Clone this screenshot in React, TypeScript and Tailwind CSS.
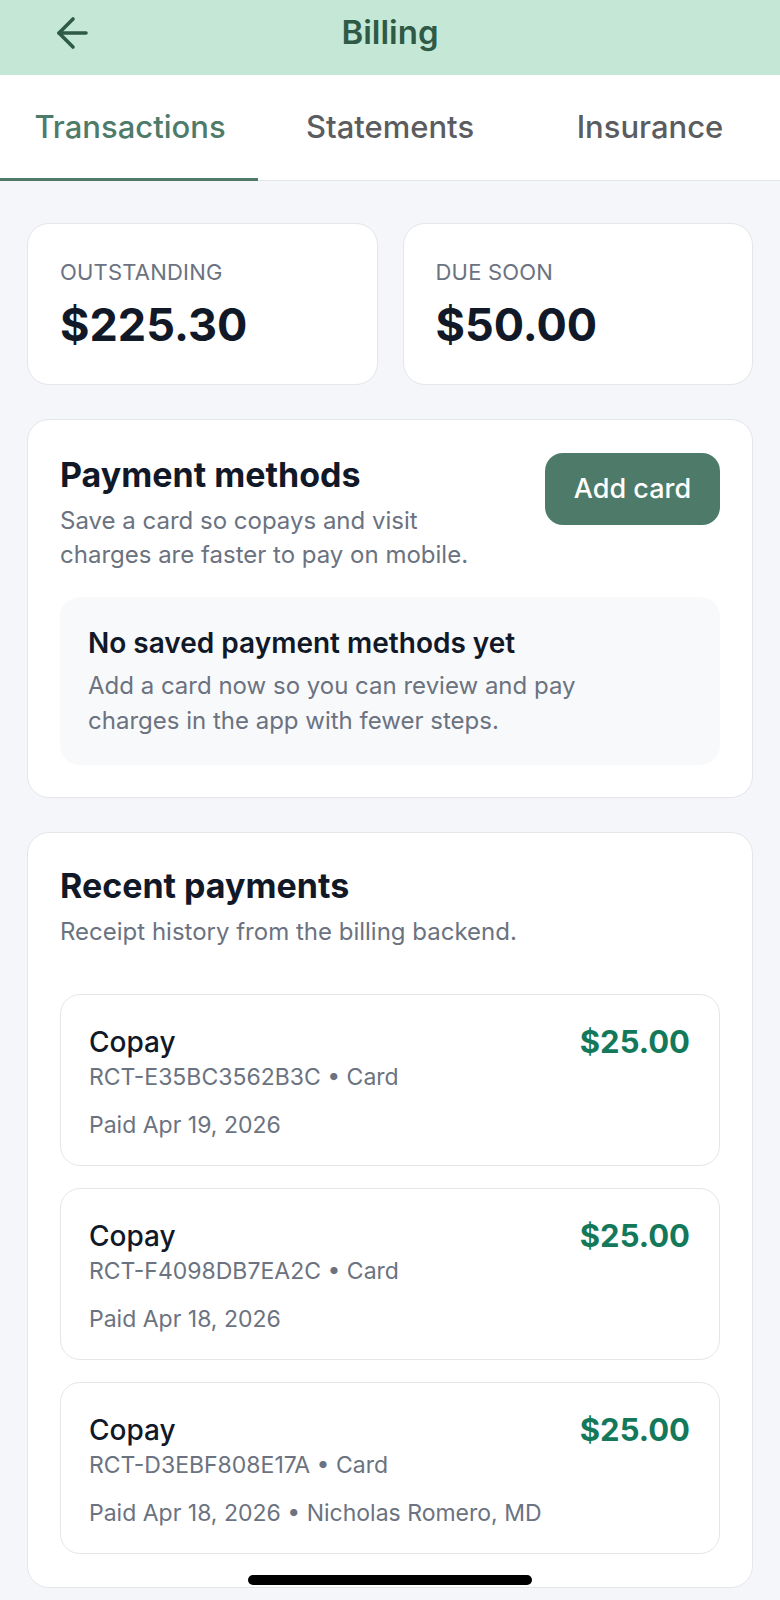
import React from "react";

type Payment = {
    id: string;
    label: string;
    amount: string;
    method: string;
    paid: string;
    provider?: string;
};

const payments: Payment[] = [
    { id: "RCT-E35BC3562B3C", label: "Copay", amount: "$25.00", method: "Card", paid: "Paid Apr 19, 2026" },
    { id: "RCT-F4098DB7EA2C", label: "Copay", amount: "$25.00", method: "Card", paid: "Paid Apr 18, 2026" },
    { id: "RCT-D3EBF808E17A", label: "Copay", amount: "$25.00", method: "Card", paid: "Paid Apr 18, 2026", provider: "Nicholas Romero, MD" },
];

const tabs = ["Transactions", "Statements", "Insurance"];

const BackArrow = () => (
    <svg width="34" height="34" viewBox="0 0 34 34" fill="none" stroke="#2f5a46" strokeWidth="3.6" strokeLinecap="round" strokeLinejoin="round">
        <path d="M18 3 L4 17 L18 31" />
        <path d="M4 17 H31" />
    </svg>
);

const SummaryCard = ({ label, value }: { label: string; value: string }) => (
    <div className="flex-1 bg-white rounded-[22px] border border-[#e4e6ea] px-[32px] pt-[34px] pb-[33px]">
        <div className="text-[22px] leading-[28px] text-[#6b7280] tracking-[0.2px] uppercase">{label}</div>
        <div className="mt-[13px] text-[45px] leading-[52px] font-bold text-[#111827]">{value}</div>
    </div>
);

const PaymentRow = ({ item }: { item: Payment }) => (
    <div className="bg-white rounded-[20px] border border-[#e4e6ea] pl-[28px] pr-[29px] pt-[30px] pb-[25px]">
        <div className="flex justify-between items-start">
            <div className="text-[28px] leading-[34px] font-medium text-[#111827]">{item.label}</div>
            <div className="text-[31px] leading-[34px] font-bold text-[#14795a]">{item.amount}</div>
        </div>
        <div className="mt-[3px] text-[23px] leading-[30px] text-[#6b7280]">
            {item.id} • {item.method}
        </div>
        <div className="mt-[18px] text-[23px] leading-[30px] text-[#6b7280]">
            {item.paid}
            {item.provider ? " • " + item.provider : ""}
        </div>
    </div>
);

export default function App() {
    return (
        <div className="min-h-[1600px] bg-[#f5f6f9] font-['Inter',sans-serif] relative">
            {/* header */}
            <div className="h-[75px] pb-[9px] bg-[#c5e8d6] grid grid-cols-[1fr_auto_1fr] items-center">
                <div className="pl-[55px] flex items-center">
                    <BackArrow />
                </div>
                <div className="text-[33px] font-semibold text-[#2f5a46]">Billing</div>
                <div />
            </div>

            {/* tabs */}
            <div className="flex bg-white border-b border-[#e2e5e9]">
                {tabs.map((t, i) => (
                    <div key={t} className="relative flex-1 h-[105px] flex items-center justify-center">
                        <span className={"text-[31px] font-medium " + (i === 0 ? "text-[#4e7b69]" : "text-[#5b5c5f]")}>{t}</span>
                        {i === 0 && <span className="absolute left-0 right-[2px] -bottom-[1px] h-[3px] bg-[#4e7b69]" />}
                    </div>
                ))}
            </div>

            <div className="px-[27px] pt-[42px] pb-[9px] flex flex-col gap-[34px]">
                <div className="flex gap-[25px]">
                    <SummaryCard label="Outstanding" value="$225.30" />
                    <SummaryCard label="Due soon" value="$50.00" />
                </div>

                {/* payment methods */}
                <div className="bg-white rounded-[22px] border border-[#e4e6ea] px-[32px] pt-[33px] pb-[32px]">
                    <div className="flex justify-between items-start">
                        <div className="max-w-[430px] pt-[2px]">
                            <div className="text-[34px] leading-[40px] font-bold text-[#111827]">Payment methods</div>
                            <div className="mt-[9px] text-[24px] leading-[34px] text-[#6b7280]">
                                Save a card so copays and visit charges are faster to pay on mobile.
                            </div>
                        </div>
                        <button className="w-[175px] h-[72px] rounded-[18px] bg-[#4e7b69] text-white text-[27px] font-medium">Add card</button>
                    </div>
                    <div className="mt-[25px] bg-[#f8f9fb] rounded-[20px] pl-[28px] pr-[29px] pt-[29px] pb-[27px]">
                        <div className="text-[28px] leading-[34px] font-semibold text-[#111827]">No saved payment methods yet</div>
                        <div className="mt-[8px] max-w-[540px] text-[24px] leading-[35px] text-[#6b7280]">
                            Add a card now so you can review and pay charges in the app with fewer steps.
                        </div>
                    </div>
                </div>

                {/* recent payments */}
                <div className="bg-white rounded-[22px] border border-[#e4e6ea] px-[32px] pt-[33px] pb-[33px]">
                    <div className="text-[34px] leading-[40px] font-bold text-[#111827]">Recent payments</div>
                    <div className="mt-[9px] text-[24px] leading-[34px] text-[#6b7280]">Receipt history from the billing backend.</div>
                    <div className="mt-[45px] flex flex-col gap-[22px]">
                        {payments.map((p) => (
                            <PaymentRow key={p.id} item={p} />
                        ))}
                    </div>
                </div>
            </div>

            {/* home indicator */}
            <div className="absolute left-1/2 -translate-x-1/2 top-[1575px] w-[284px] h-[10px] rounded-full bg-black" />
        </div>
    );
}
